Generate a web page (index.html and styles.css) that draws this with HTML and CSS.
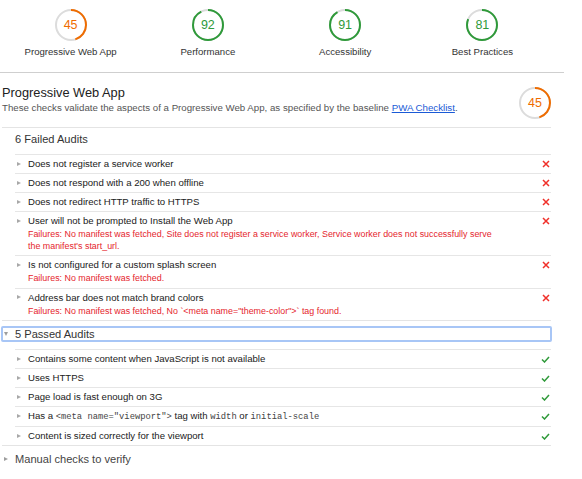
FILE: index.html
```html
<!DOCTYPE html>
<html>
<head>
<meta charset="utf-8">
<link rel="stylesheet" href="styles.css">
</head>
<body>
<div class="page">
  <div class="scores">
    <div class="scores-inner">
      <div class="score">
        <div class="gauge orange">
          <svg viewBox="0 0 32 32" width="32" height="32"><circle cx="16" cy="16" r="15" class="track"/><circle cx="16" cy="16" r="15" class="arc" stroke-dasharray="42.4 200" transform="rotate(-90 16 16)"/></svg>
          <div class="gauge-num">45</div>
        </div>
        <div class="score-label">Progressive Web App</div>
      </div>
      <div class="score">
        <div class="gauge green">
          <svg viewBox="0 0 32 32" width="32" height="32"><circle cx="16" cy="16" r="15" class="track"/><circle cx="16" cy="16" r="15" class="arc" stroke-dasharray="86.7 200" transform="rotate(-90 16 16)"/></svg>
          <div class="gauge-num">92</div>
        </div>
        <div class="score-label">Performance</div>
      </div>
      <div class="score">
        <div class="gauge green">
          <svg viewBox="0 0 32 32" width="32" height="32"><circle cx="16" cy="16" r="15" class="track"/><circle cx="16" cy="16" r="15" class="arc" stroke-dasharray="85.8 200" transform="rotate(-90 16 16)"/></svg>
          <div class="gauge-num">91</div>
        </div>
        <div class="score-label">Accessibility</div>
      </div>
      <div class="score">
        <div class="gauge green">
          <svg viewBox="0 0 32 32" width="32" height="32"><circle cx="16" cy="16" r="15" class="track"/><circle cx="16" cy="16" r="15" class="arc" stroke-dasharray="76.3 200" transform="rotate(-90 16 16)"/></svg>
          <div class="gauge-num">81</div>
        </div>
        <div class="score-label">Best Practices</div>
      </div>
    </div>
  </div>

  <div class="category">
    <div class="cat-header">
      <div class="cat-text">
        <div class="cat-title">Progressive Web App</div>
        <div class="cat-desc">These checks validate the aspects of a Progressive Web App, as specified by the baseline <a href="#" class="link">PWA Checklist</a>.</div>
      </div>
      <div class="gauge orange">
        <svg viewBox="0 0 32 32" width="32" height="32"><circle cx="16" cy="16" r="15" class="track"/><circle cx="16" cy="16" r="15" class="arc" stroke-dasharray="42.4 200" transform="rotate(-90 16 16)"/></svg>
        <div class="gauge-num">45</div>
      </div>
    </div>

    <div class="group">
      <div class="group-summary first">6 Failed Audits</div>
      <div class="audits">
        <div class="audit">
          <span class="tri"></span>
          <div class="audit-body"><div class="audit-title">Does not register a service worker</div></div>
          <span class="icon"><svg width="8" height="8" viewBox="0 0 8 8"><path d="M1 1L7 7M7 1L1 7" class="x"/></svg></span>
        </div>
        <div class="audit">
          <span class="tri"></span>
          <div class="audit-body"><div class="audit-title">Does not respond with a 200 when offline</div></div>
          <span class="icon"><svg width="8" height="8" viewBox="0 0 8 8"><path d="M1 1L7 7M7 1L1 7" class="x"/></svg></span>
        </div>
        <div class="audit">
          <span class="tri"></span>
          <div class="audit-body"><div class="audit-title">Does not redirect HTTP traffic to HTTPS</div></div>
          <span class="icon"><svg width="8" height="8" viewBox="0 0 8 8"><path d="M1 1L7 7M7 1L1 7" class="x"/></svg></span>
        </div>
        <div class="audit">
          <span class="tri"></span>
          <div class="audit-body"><div class="audit-title">User will not be prompted to Install the Web App</div>
            <div class="audit-fail">Failures: No manifest was fetched, Site does not register a service worker, Service worker does not successfully serve the manifest's start_url.</div></div>
          <span class="icon"><svg width="8" height="8" viewBox="0 0 8 8"><path d="M1 1L7 7M7 1L1 7" class="x"/></svg></span>
        </div>
        <div class="audit">
          <span class="tri"></span>
          <div class="audit-body"><div class="audit-title">Is not configured for a custom splash screen</div>
            <div class="audit-fail">Failures: No manifest was fetched.</div></div>
          <span class="icon"><svg width="8" height="8" viewBox="0 0 8 8"><path d="M1 1L7 7M7 1L1 7" class="x"/></svg></span>
        </div>
        <div class="audit">
          <span class="tri"></span>
          <div class="audit-body"><div class="audit-title">Address bar does not match brand colors</div>
            <div class="audit-fail">Failures: No manifest was fetched, No `&lt;meta name="theme-color"&gt;` tag found.</div></div>
          <span class="icon"><svg width="8" height="8" viewBox="0 0 8 8"><path d="M1 1L7 7M7 1L1 7" class="x"/></svg></span>
        </div>
      </div>
    </div>

    <div class="group">
      <div class="group-summary focused"><span class="gtri down"></span>5 Passed Audits</div>
      <div class="audits">
        <div class="audit">
          <span class="tri"></span>
          <div class="audit-body"><div class="audit-title">Contains some content when JavaScript is not available</div></div>
          <span class="icon"><svg width="9" height="7" viewBox="0 0 9 7"><path d="M1 3.5L3.5 6L8 1" class="check"/></svg></span>
        </div>
        <div class="audit">
          <span class="tri"></span>
          <div class="audit-body"><div class="audit-title">Uses HTTPS</div></div>
          <span class="icon"><svg width="9" height="7" viewBox="0 0 9 7"><path d="M1 3.5L3.5 6L8 1" class="check"/></svg></span>
        </div>
        <div class="audit">
          <span class="tri"></span>
          <div class="audit-body"><div class="audit-title">Page load is fast enough on 3G</div></div>
          <span class="icon"><svg width="9" height="7" viewBox="0 0 9 7"><path d="M1 3.5L3.5 6L8 1" class="check"/></svg></span>
        </div>
        <div class="audit">
          <span class="tri"></span>
          <div class="audit-body"><div class="audit-title">Has a <code class="code">&lt;meta name="viewport"&gt;</code> tag with <code class="code">width</code> or <code class="code">initial-scale</code></div></div>
          <span class="icon"><svg width="9" height="7" viewBox="0 0 9 7"><path d="M1 3.5L3.5 6L8 1" class="check"/></svg></span>
        </div>
        <div class="audit">
          <span class="tri"></span>
          <div class="audit-body"><div class="audit-title">Content is sized correctly for the viewport</div></div>
          <span class="icon"><svg width="9" height="7" viewBox="0 0 9 7"><path d="M1 3.5L3.5 6L8 1" class="check"/></svg></span>
        </div>
      </div>
    </div>

    <div class="group-summary manual"><span class="gtri right"></span>Manual checks to verify</div>
  </div>
</div>
</body>
</html>
```

FILE: styles.css
```css
body {
  margin: 0;
  font-family: "Liberation Sans", Arial, sans-serif;
  color: #212121;
  background: #fff;
}

.page {
  width: 564px;
}

.scores {
  height: 72px;
  border-bottom: 1px solid #cfcfcf;
}

.scores-inner {
  margin-left: 2px;
  width: 549px;
  display: grid;
  grid-template-columns: repeat(4, 1fr);
}

.score {
  display: flex;
  flex-direction: column;
  align-items: center;
  padding-top: 9px;
}

.gauge {
  display: grid;
  width: 32px;
  height: 32px;
}

.gauge > * {
  grid-area: 1 / 1;
}

.gauge svg {
  display: block;
}

.gauge .track {
  fill: none;
  stroke: #dcdcdc;
  stroke-width: 2;
}

.gauge .arc {
  fill: none;
  stroke-width: 2;
}

.gauge.orange .arc { stroke: #ef6c00; }
.gauge.green .arc { stroke: #2f9a3a; }

.gauge-num {
  display: flex;
  align-items: center;
  justify-content: center;
  font-size: 12.5px;
}

.gauge.orange .gauge-num { color: #ef6c00; }
.gauge.green .gauge-num { color: #2f9a3a; }

.score-label {
  margin-top: 5px;
  font-size: 9.6px;
  line-height: 12px;
  color: #333;
}

.category {
  margin-left: 2px;
  width: 549px;
}

.cat-header {
  display: flex;
  justify-content: space-between;
  align-items: flex-start;
  padding: 14px 0 8px;
  border-bottom: 1px solid #e4e4e4;
}

.cat-text {
  margin-top: -2px;
}

.cat-title {
  font-size: 12.8px;
  line-height: 16px;
  color: #212121;
}

.cat-desc {
  font-size: 9.7px;
  line-height: 14px;
  color: #555;
}

.link {
  color: #1a5ad6;
  text-decoration: underline;
}

.group {
  border-bottom: 1px solid #e4e4e4;
}

.group-summary {
  display: flex;
  align-items: center;
  margin: 6px 0 8px;
  padding-left: 13px;
  font-size: 11.1px;
  line-height: 14px;
  color: #333;
  position: relative;
}

.group-summary.first {
  margin-top: 4px;
}

.group-summary.focused {
  outline: 2px solid #a8c6f6;
  outline-offset: -1px;
  border-radius: 1px;
}

.group-summary.manual {
  color: #444;
}

.gtri {
  position: absolute;
  left: 2px;
  width: 0;
  height: 0;
}

.gtri.down {
  top: 5px;
  border-top: 4px solid #9e9e9e;
  border-left: 2.5px solid transparent;
  border-right: 2.5px solid transparent;
}

.gtri.right {
  top: 5px;
  border-left: 4px solid #9e9e9e;
  border-top: 2.5px solid transparent;
  border-bottom: 2.5px solid transparent;
}

.audits {
  margin-left: 13px;
}

.audit {
  display: flex;
  align-items: flex-start;
  padding: 3px 0 3px 2px;
  border-top: 1px solid #e6e6e6;
}

.tri {
  flex: none;
  width: 0;
  height: 0;
  margin-top: 3.5px;
  margin-right: 7px;
  border-left: 4px solid #a8a8a8;
  border-top: 2.5px solid transparent;
  border-bottom: 2.5px solid transparent;
}

.audit-body {
  flex: 1;
}

.audit-title {
  font-size: 9.6px;
  line-height: 12px;
  color: #212121;
}

.code {
  font-family: "Liberation Mono", monospace;
  font-size: 8.8px;
  color: #444;
}

.audit-fail {
  margin-top: 2px;
  max-width: 470px;
  font-size: 8.9px;
  line-height: 11.5px;
  color: #e5252d;
}

.icon {
  flex: none;
  width: 9px;
  height: 12px;
  margin-right: 1px;
  display: flex;
  align-items: center;
  justify-content: center;
}

.icon svg {
  display: block;
}

.x {
  stroke: #f0302a;
  stroke-width: 1.5;
  fill: none;
}

.check {
  stroke: #2f9a3a;
  stroke-width: 1.5;
  fill: none;
}
```
